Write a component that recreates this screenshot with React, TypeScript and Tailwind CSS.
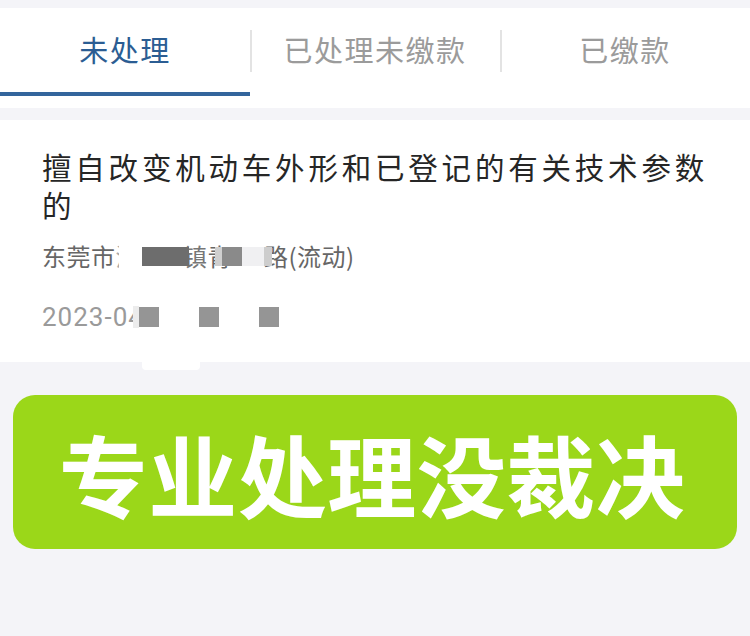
import React from 'react';

const tabs = ['未处理', '已处理未缴款', '已缴款'];

const App: React.FC = () => {
  return (
    <div
      className="w-[750px] h-[636px] bg-[#f4f4f8] overflow-hidden"
      style={{ fontFamily: '"Noto Sans CJK SC", "Noto Sans", sans-serif' }}
    >
      <div className="h-[8px]" />
      {/* tabs */}
      <div className="bg-white h-[100px] flex">
        {tabs.map((t, i) => (
          <div key={t} className="relative flex-1 flex items-start justify-center pt-[21px]">
            {i > 0 && <div className="absolute left-0 top-[22px] h-[42px] w-[1.5px] bg-[#e3e3e3]" />}
            <span
              className={`text-[29px] leading-[40px] tracking-[1.5px] ${i === 0 ? 'text-[#2b5d93]' : 'text-[#9b9b9b]'}`}
            >
              {t}
            </span>
            {i === 0 && <div className="absolute left-0 right-0 top-[84px] h-[4px] bg-[#33659c]" />}
          </div>
        ))}
      </div>
      <div className="h-[12px]" />

      {/* record card */}
      <div className="bg-white h-[242px] pl-[42px] pr-[20px] pt-[27px]">
        <div className="text-[29.5px] leading-[38px] tracking-[3.8px] text-[#262626]">
          擅自改变机动车外形和已登记的有关技术参数的
        </div>
        <div className="mt-[18px] flex items-center text-[24px] leading-[30px] tracking-[0.5px] text-[#666]">
          <span>东莞市</span>
          <span className="text-[#aaa]">清</span>
          <span className="relative -ml-[21px] w-[23px] h-[26px] bg-white" />
          <span className="relative z-10 w-[47px] h-[19px] bg-[#6d6d6d]" />
          <span className="-ml-[6px] text-[#777]">镇</span>
          <span>青</span>
          <span className="relative -ml-[17px] w-[7px] h-[19px] bg-[#cfcfcf]" />
          <span className="relative w-[20px] h-[19px] bg-[#8a8a8a]" />
          <span className="relative w-[22px] h-[19px] bg-[#f0f0f2]" />
          <span className="relative z-10 w-[8px] h-[19px] bg-[#cdcdcd]" />
          <span className="-ml-[8px]">路(流动)</span>
        </div>
        <div
          className="mt-[31px] flex items-center text-[26px] leading-[30px] tracking-[1px] text-[#9a9a9a]"
          style={{ fontFamily: 'Roboto, "Noto Sans", sans-serif' }}
        >
          <span>2023-04</span>
          <span className="relative -ml-[11px] w-[6px] h-[22px] bg-[#ececec]" />
          <span className="relative w-[20px] h-[20px] bg-[#959595]" />
          <span className="ml-[40px] w-[20px] h-[20px] bg-[#959595]" />
          <span className="ml-[40px] w-[20px] h-[20px] bg-[#959595]" />
        </div>
      </div>
      <div className="ml-[142px] w-[58px] h-[8px] bg-white rounded-b-[4px]" />

      {/* banner */}
      <div className="mx-[13px] mt-[25px] h-[154px] rounded-[22px] bg-[#9bd719] flex items-center justify-center">
        <span className="text-[89px] leading-none font-bold text-white tracking-[0.5px] pr-[6px]">专业处理没裁决</span>
      </div>
    </div>
  );
};

export default App;
